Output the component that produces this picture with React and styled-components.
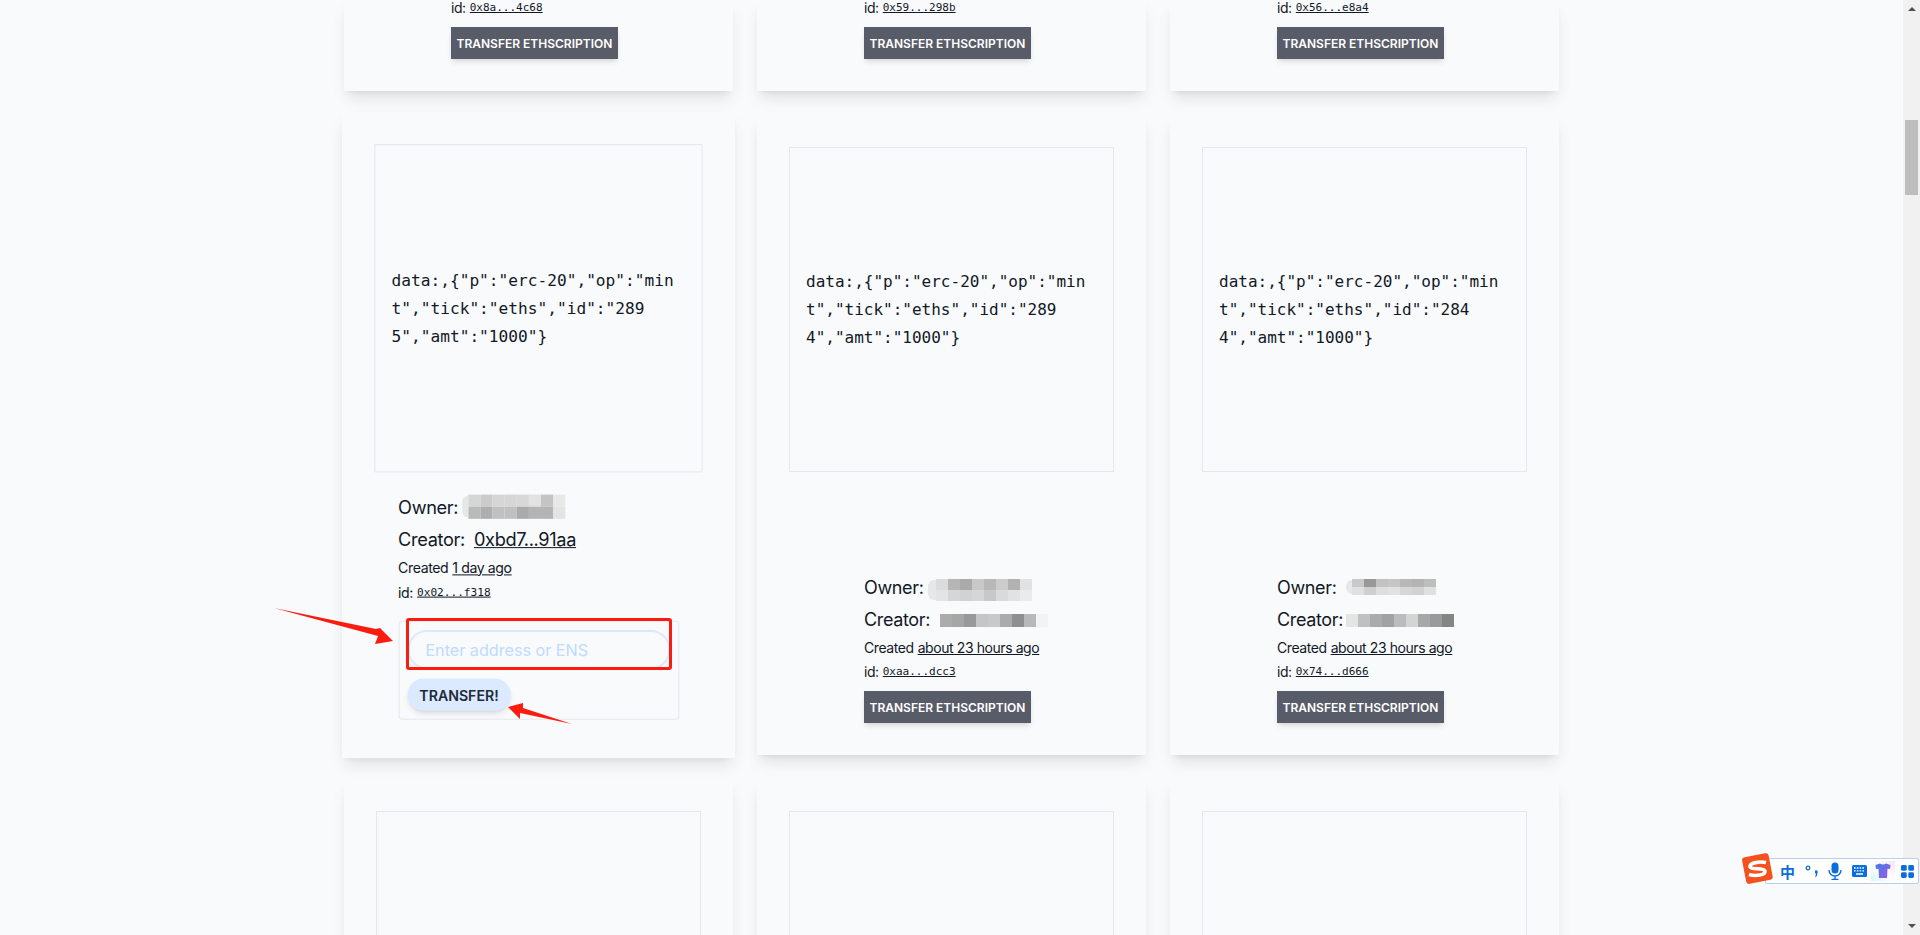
import styled, { createGlobalStyle } from "styled-components";

const GlobalStyle = createGlobalStyle`
  html, body {
    margin: 0;
    padding: 0;
    height: 100%;
    overflow: hidden;
    background: #f9fafc;
  }
  * {
    box-sizing: border-box;
  }
`;

const Page = styled.div`
  position: relative;
  display: flex;
  height: 935px;
  overflow: hidden;
  background: #f9fafc;
  font-family: Inter, "Liberation Sans", sans-serif;
  color: #111827;
`;

const Main = styled.main`
  flex: 1;
  min-width: 0;
  display: flex;
  justify-content: center;
`;

const Grid = styled.div`
  display: grid;
  grid-template-columns: repeat(3, 389px);
  grid-template-rows: 91px 640px 640px;
  gap: 24px;
`;

const Card = styled.article`
  display: flex;
  flex-direction: column;
  justify-content: ${(props) => (props.$cut ? "flex-end" : "flex-start")};
  align-items: center;
  padding: ${(props) => (props.$cut ? "0 32px 32px" : "32px")};
  overflow: hidden;
  background: #f9fafb;
  box-shadow: 0 10px 15px -3px rgba(0, 0, 0, 0.1), 0 4px 6px -4px rgba(0, 0, 0, 0.1);
  ${(props) => props.$hover && "transform: scale(1.01); position: relative; z-index: 1;"}
`;

const Preview = styled.div`
  flex: none;
  width: 325px;
  height: 325px;
  display: flex;
  flex-direction: column;
  justify-content: center;
  padding: 0 16px;
  border: 1px solid #e5e7eb;
  font-family: "DejaVu Sans Mono", "Liberation Mono", monospace;
  font-size: 16px;
  line-height: 28px;
  color: #111827;
`;

const PreviewLine = styled.span`
  display: block;
  white-space: pre;
`;

const Meta = styled.div`
  flex: none;
  width: ${(props) => (props.$wide ? "278px" : "175px")};
  margin-top: auto;
  display: flex;
  flex-direction: column;
  align-items: flex-start;
`;

const Line = styled.div`
  display: flex;
  align-items: center;
  height: 32px;
  font-size: 18px;
  letter-spacing: -0.35px;
  white-space: nowrap;
`;

const BigLink = styled.a`
  margin-left: 9px;
  color: inherit;
  text-decoration: underline;
`;

const SmallLine = styled.div`
  height: 24px;
  display: flex;
  align-items: center;
  gap: 4px;
  font-size: 14px;
  letter-spacing: -0.42px;
  white-space: nowrap;
`;

const SmallLink = styled.a`
  color: inherit;
  text-decoration: underline;
`;

const MonoLink = styled.a`
  font-family: "DejaVu Sans Mono", "Liberation Mono", monospace;
  font-size: 11px;
  letter-spacing: 0;
  color: inherit;
  text-decoration: underline;
`;

const EthButton = styled.button`
  margin-top: 8px;
  height: 32px;
  padding: 0 5.5px;
  border: 0;
  background: #585c69;
  color: #fff;
  font-family: Inter, "Liberation Sans", sans-serif;
  font-size: 12px;
  font-weight: 600;
  text-transform: uppercase;
  white-space: nowrap;
  box-shadow: 0 4px 6px -1px rgba(0, 0, 0, 0.1), 0 2px 4px -2px rgba(0, 0, 0, 0.1);
`;

const TransferForm = styled.form`
  width: 278px;
  margin: 17px 0 6px;
  padding: 8px;
  display: flex;
  flex-direction: column;
  align-items: flex-start;
  gap: 9px;
  border: 1px solid #e5e7eb;
  border-radius: 4px;
`;

const AddressInput = styled.input`
  width: 100%;
  height: 39px;
  padding: 0 16px;
  border: 2px solid #dbeafe;
  border-radius: 19px;
  outline: none;
  background: transparent;
  font-family: Inter, "Liberation Sans", sans-serif;
  font-size: 16px;
  &::placeholder {
    color: #bfdbfe;
    opacity: 1;
  }
`;

const TransferButton = styled.button`
  height: 32px;
  padding: 0 12px;
  border: 0;
  border-radius: 16px;
  background: #dbeafe;
  color: #1e293b;
  font-family: Inter, "Liberation Sans", sans-serif;
  font-size: 14px;
  font-weight: 600;
  box-shadow: 0 4px 6px -1px rgba(0, 0, 0, 0.1), 0 2px 4px -2px rgba(0, 0, 0, 0.1);
`;

/* redaction blocks that sit on top of the addresses in the screenshot */
const Mosaic = styled.span`
  position: relative;
  flex: none;
  align-self: flex-start;
  display: grid;
  grid-template-columns: repeat(${(props) => props.$cols}, 12px);
  grid-auto-rows: ${(props) => props.$row}px;
  margin-left: ${(props) => props.$left}px;
  margin-top: ${(props) => props.$top}px;
  &::before {
    content: "";
    position: absolute;
    left: -${(props) => props.$smudge}px;
    top: 1px;
    bottom: 1px;
    width: ${(props) => props.$smudge}px;
    border-radius: 6px 0 0 6px;
    background: #e6e7e9;
  }
`;

const Cell = styled.span`
  background: ${(props) => props.$c};
`;

const Scrollbar = styled.aside`
  flex: none;
  width: 17px;
  display: flex;
  flex-direction: column;
  align-items: center;
  background: #f1f1f1;
`;

const ArrowUp = styled.span`
  margin-top: 7px;
  width: 0;
  height: 0;
  border-left: 4px solid transparent;
  border-right: 4px solid transparent;
  border-bottom: 4px solid #505050;
`;

const ArrowDown = styled.span`
  margin-bottom: 7px;
  width: 0;
  height: 0;
  border-left: 4px solid transparent;
  border-right: 4px solid transparent;
  border-top: 4px solid #505050;
`;

const Thumb = styled.span`
  margin-top: 109px;
  width: 13px;
  height: 75px;
  background: #bdbdbd;
`;

const Spacer = styled.span`
  flex: 1;
`;

const Drawing = styled.svg`
  position: absolute;
  left: 0;
  top: 0;
  z-index: 2;
  pointer-events: none;
`;

const RedBox = styled.div`
  position: absolute;
  left: 406px;
  top: 618px;
  width: 266px;
  height: 52px;
  z-index: 2;
  border: 3px solid #fb1c10;
  border-radius: 3px;
  pointer-events: none;
`;

const Ime = styled.div`
  position: absolute;
  left: 1765px;
  top: 858px;
  width: 154px;
  height: 26px;
  z-index: 3;
  display: flex;
  align-items: center;
  padding-left: 14px;
  background: #fff;
  border: 1px solid #b9d0e8;
  border-radius: 2px;
  color: #0a6fdc;
`;

const ImeLogo = styled.svg`
  position: absolute;
  left: 1741px;
  top: 852px;
  z-index: 4;
`;

const ImeChar = styled.span`
  width: 16px;
  font-family: "Noto Sans CJK SC", sans-serif;
  font-size: 15px;
  font-weight: 700;
  line-height: 1;
`;

const ImeIcon = styled.svg`
  flex: none;
  margin-left: ${(props) => props.$left}px;
`;

const data = (id) => [
  'data:,{"p":"erc-20","op":"min',
  `t","tick":"eths","id":"${id.slice(0, 3)}`,
  `${id.slice(3)}","amt":"1000"}`,
];

const cards = [
  { cut: true, id: "0x8a...4c68" },
  { cut: true, id: "0x59...298b" },
  { cut: true, id: "0x56...e8a4" },
  {
    hover: true,
    number: "2895",
    id: "0x02...f318",
    created: "1 day ago",
    creator: "0xbd7...91aa",
    owner: { left: 10, top: 4, row: 12, cols: 8, smudge: 6, cells: ["#d6d6d6", "#cbcbcb", "#d6d6d6", "#d6d6d6", "#d8d8d8", "#e2e2e2", "#c4c4c4", "#e8e8e8", "#bababa", "#aeaeae", "#c0c0c0", "#c0c0c0", "#ababab", "#b4b4b4", "#b4b4b4", "#e4e4e4"] },
  },
  {
    number: "2894",
    id: "0xaa...dcc3",
    created: "about 23 hours ago",
    owner: { left: 12, top: 8, row: 11, cols: 8, smudge: 8, cells: ["#dcdcdc", "#b6b6b6", "#aaaaaa", "#c8c8c8", "#b8b8b8", "#cccccc", "#b2b2b2", "#e2e2e2", "#e4e4e4", "#d6d6d6", "#d2d2d2", "#d6d6d6", "#c8c8c8", "#dadada", "#e2e2e2", "#ebebeb"] },
    creatorMosaic: { left: 10, top: 11, row: 13, cols: 9, smudge: 0, cells: ["#ababab", "#a6a6a6", "#999999", "#c6c6c6", "#c9c9c9", "#ababab", "#8f8f8f", "#b8b8b8", "#f3f3f3"] },
  },
  {
    number: "2844",
    id: "0x74...d666",
    created: "about 23 hours ago",
    owner: { left: 15, top: 8, row: 8, cols: 7, smudge: 6, cells: ["#c9c9c9", "#989898", "#c2c2c2", "#c6c6c6", "#b8b8b8", "#b4b4b4", "#bebebe", "#e0e0e0", "#cfcfcf", "#dedede", "#e2e2e2", "#d6d6d6", "#d2d2d2", "#e0e0e0"] },
    creatorMosaic: { left: 3, top: 11, row: 13, cols: 9, smudge: 0, cells: ["#e4e4e4", "#c0c0c0", "#ababab", "#a2a2a2", "#bcbcbc", "#d4d4d4", "#a8a8a8", "#9a9a9a", "#858585"] },
  },
  { empty: true },
  { empty: true },
  { empty: true },
];

const Redacted = ({ left, top, row, cols, smudge, cells }) => (
  <Mosaic $left={left} $top={top} $row={row} $cols={cols} $smudge={smudge}>
    {cells.map((c, i) => (
      <Cell key={i} $c={c} />
    ))}
  </Mosaic>
);

const EthCard = ({ card }) => {
  if (card.empty) {
    return (
      <Card>
        <Preview />
      </Card>
    );
  }
  return (
    <Card $cut={card.cut} $hover={card.hover}>
      {card.number && (
        <Preview>
          {data(card.number).map((l) => (
            <PreviewLine key={l}>{l}</PreviewLine>
          ))}
        </Preview>
      )}
      <Meta $wide={card.hover}>
        {!card.cut && (
          <>
            <Line>
              Owner:
              <Redacted {...card.owner} />
            </Line>
            <Line>
              Creator:
              {card.creator ? <BigLink>{card.creator}</BigLink> : <Redacted {...card.creatorMosaic} />}
            </Line>
            <SmallLine>
              Created <SmallLink>{card.created}</SmallLink>
            </SmallLine>
          </>
        )}
        <SmallLine>
          id: <MonoLink>{card.id}</MonoLink>
        </SmallLine>
        {card.hover ? (
          <TransferForm>
            <AddressInput placeholder="Enter address or ENS" />
            <TransferButton type="button">TRANSFER!</TransferButton>
          </TransferForm>
        ) : (
          <EthButton type="button">Transfer Ethscription</EthButton>
        )}
      </Meta>
    </Card>
  );
};

const App = () => {
  return (
    <Page>
      <GlobalStyle />
      <Main>
        <Grid>
          {cards.map((card, i) => (
            <EthCard key={i} card={card} />
          ))}
        </Grid>
      </Main>
      <Scrollbar>
        <ArrowUp />
        <Thumb />
        <Spacer />
        <ArrowDown />
      </Scrollbar>

      <RedBox />
      <Drawing width="700" height="760" viewBox="0 0 700 760">
        <polygon fill="#fb1c10" points="274,608 376,629 380,628 393,641 375,644 378,636" />
        <polygon fill="#fb1c10" points="572,724 523,708 523,703 508,707 520,719 520,713" />
      </Drawing>

      <ImeLogo width="34" height="34" viewBox="0 0 34 34">
        <rect x="3" y="3" width="27" height="27" rx="3" fill="#f4511e" transform="rotate(-11 17 17)" />
        <path d="M25 10.5 C18 9 9 11 9 14.5 C9 18 24 15.5 24 19.5 C24 23 15 24.5 8 22.5" fill="none" stroke="#fff" strokeWidth="3.6" />
      </ImeLogo>
      <Ime>
        <ImeChar>中</ImeChar>
        <ImeIcon $left={9} width="14" height="16" viewBox="0 0 14 16">
          <circle cx="3" cy="5" r="1.8" fill="none" stroke="currentColor" strokeWidth="1.3" />
          <path d="M10 7.5 h2.6 v2.5 q0 3 -2.6 4.5 q1 -2.5 0.8 -4.2 h-0.8 z" fill="currentColor" />
        </ImeIcon>
        <ImeIcon $left={9} width="14" height="18" viewBox="0 0 14 18">
          <rect x="3.5" y="0.5" width="7" height="11" rx="3.5" fill="currentColor" />
          <path d="M1 8 a6 6 0 0 0 12 0 M7 14 v3.5 M3.5 17.5 h7" fill="none" stroke="currentColor" strokeWidth="1.4" />
        </ImeIcon>
        <ImeIcon $left={10} width="15" height="12" viewBox="0 0 15 12">
          <rect width="15" height="12" rx="1.5" fill="currentColor" />
          <path d="M2 3 h11 M2 5.8 h11" stroke="#fff" strokeWidth="1.3" strokeDasharray="1.6 1.2" />
          <path d="M4 9 h7" stroke="#fff" strokeWidth="1.5" />
        </ImeIcon>
        <ImeIcon $left={4} width="24" height="20" viewBox="0 0 24 20">
          <defs>
            <linearGradient id="shirt" x1="0" y1="0" x2="1" y2="1">
              <stop offset="0" stopColor="#3f7be8" />
              <stop offset="1" stopColor="#a05be0" />
            </linearGradient>
            <linearGradient id="glow" x1="0" y1="1" x2="1" y2="0">
              <stop offset="0" stopColor="#d4f5f5" />
              <stop offset="0.5" stopColor="#ffffff" />
              <stop offset="1" stopColor="#f8e2f8" />
            </linearGradient>
          </defs>
          <rect width="24" height="20" fill="url(#glow)" />
          <path d="M4.5 4 L9 2.5 Q12 4.5 15 2.5 L19.5 4 L19 8 L16.5 7.8 L16 17 H8 L7.5 7.8 L5 8 Z" fill="url(#shirt)" />
        </ImeIcon>
        <ImeIcon $left={6} width="13" height="13" viewBox="0 0 14 14">
          <rect width="6.2" height="6.2" rx="1.6" fill="currentColor" />
          <rect x="7.8" width="6.2" height="6.2" rx="1.6" fill="currentColor" />
          <rect y="7.8" width="6.2" height="6.2" rx="1.6" fill="currentColor" />
          <rect x="7.8" y="7.8" width="6.2" height="6.2" rx="1.6" fill="currentColor" />
        </ImeIcon>
      </Ime>
    </Page>
  );
};

export default App;
